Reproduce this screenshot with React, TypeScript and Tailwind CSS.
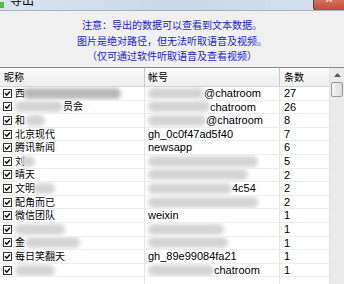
import React from 'react'

type Row = {
  name: React.ReactNode
  account: React.ReactNode
  count: string
}

function Blur({ w, dark = false, ml = 0 }: { w: number; dark?: boolean; ml?: number }) {
  return (
    <span
      className={`inline-block h-[11px] rounded-full align-middle blur-[2px] ${dark ? 'bg-[#b8b8b8]' : 'bg-[#d4d4d4]'}`}
      style={{ width: w, marginLeft: ml }}
    />
  )
}

function CheckBox() {
  return (
    <svg width="9" height="9" viewBox="0 0 9 9" className="shrink-0">
      <rect x="0.5" y="0.5" width="8" height="8" fill="#fff" stroke="#3a3a3a" />
      <path d="M2 4.3 L3.7 6.2 L7 2.4" fill="none" stroke="#111" strokeWidth="1.5" />
    </svg>
  )
}

const rows: Row[] = [
  { name: <><span>西</span><Blur w={98} dark ml={-2} /></>, account: <><Blur w={56} /><span>@chatroom</span></>, count: '27' },
  { name: <><Blur w={48} /><span>员会</span></>, account: <><Blur w={62} /><span>chatroom</span></>, count: '26' },
  { name: <><span>和</span><Blur w={20} /></>, account: <><Blur w={58} /><span>@chatroom</span></>, count: '8' },
  { name: <span>北京现代</span>, account: <span>gh_0c0f47ad5f40</span>, count: '7' },
  { name: <span>腾讯新闻</span>, account: <span>newsapp</span>, count: '6' },
  { name: <><span>刘</span><Blur w={14} ml={-4} /></>, account: <Blur w={110} />, count: '5' },
  { name: <span>晴天</span>, account: <Blur w={100} />, count: '2' },
  { name: <><span>文明</span><Blur w={22} ml={-2} /></>, account: <><Blur w={84} /><span>4c54</span></>, count: '2' },
  { name: <span>配角而已</span>, account: <Blur w={110} />, count: '2' },
  { name: <span>微信团队</span>, account: <span>weixin</span>, count: '1' },
  { name: <Blur w={50} />, account: <Blur w={76} />, count: '1' },
  { name: <><span>金</span><Blur w={55} /></>, account: <Blur w={80} />, count: '1' },
  { name: <span>每日笑翻天</span>, account: <span>gh_89e99084fa21</span>, count: '1' },
  { name: <Blur w={40} />, account: <><Blur w={66} /><span>chatroom</span></>, count: '1' },
  { name: null, account: null, count: '' },
]

export default function App() {
  return (
    <div className="flex h-[284px] w-[344px] flex-col overflow-hidden bg-[#f0f0f0] font-['Liberation_Sans','Noto_Sans_CJK_SC',sans-serif] text-black">
      {/* title bar, mostly cut off */}
      <div className="flex h-[11px] shrink-0 justify-between overflow-hidden border-b border-[#a3b3c6] bg-gradient-to-r from-[#dbe5f0] via-[#c9d7e6] to-[#d5e1ee]">
        <div className="-mt-[8px] flex items-center gap-[6px]">
          <span className="mt-[7px] h-[6px] w-[4px] bg-[#5cb83a]" />
          <span className="text-[12px] leading-[14px]">导出</span>
        </div>
        <div className="flex h-[11px] w-[31px] justify-center overflow-hidden rounded-bl-[4px] border border-t-0 border-r-0 border-[#7d3224] bg-gradient-to-b from-[#d8705a] to-[#c24a33]">
          <span className="-mt-[9px] text-[12px] font-bold leading-[14px] text-[#f3e0dc]">x</span>
        </div>
      </div>

      {/* notes */}
      <div className="flex h-[56px] shrink-0 flex-col items-center pt-[7px] text-[10px] leading-[15.5px] text-[#2020e6]">
        <p>注意：导出的数据可以查看到文本数据。</p>
        <p>图片是绝对路径，但无法听取语音及视频。</p>
        <p>（仅可通过软件听取语音及查看视频）</p>
      </div>

      {/* list */}
      <div className="flex flex-1 border-t border-[#8a8a8a] bg-white">
        <div className="flex w-[329px] flex-col">
          <div className="flex h-[19px] shrink-0 border-b border-[#d6d6d6] bg-gradient-to-b from-[#fcfcfc] to-[#eeeeee] text-[10px] leading-[19px]">
            <div className="w-[145px] border-r border-[#c8c8c8] pl-[4px]">昵称</div>
            <div className="w-[135px] border-r border-[#c8c8c8] pl-[3px]">帐号</div>
            <div className="flex-1 pl-[4px]">条数</div>
          </div>
          {rows.map((r, i) => (
            <div key={i} className="flex h-[13.6px] shrink-0 border-b border-[#ededed]">
              <div className="flex w-[145px] items-center gap-[3px] overflow-hidden whitespace-nowrap border-r border-[#e4e4e4] pl-[3px] text-[10px]">
                {r.count && <CheckBox />}
                <span className="flex items-center">{r.name}</span>
              </div>
              <div className="flex w-[135px] items-center overflow-hidden whitespace-nowrap border-r border-[#e4e4e4] pl-[3px] text-[11px]">
                {r.account}
              </div>
              <div className="flex flex-1 items-center pl-[4px] text-[11px]">{r.count}</div>
            </div>
          ))}
        </div>

        {/* scrollbar */}
        <div className="flex w-[15px] flex-col items-center border-l border-[#e2e2e2] bg-[#ebebeb]">
          <svg width="7" height="4" viewBox="0 0 7 4" className="mt-[5px]">
            <path d="M0 4 L3.5 0 L7 4 Z" fill="#5a5a5a" />
          </svg>
          <div className="mt-[5px] h-[15px] w-[12px] rounded-[2px] border border-[#9a9a9a] bg-gradient-to-r from-[#f4f4f4] to-[#dcdcdc]" />
        </div>
      </div>
    </div>
  )
}
